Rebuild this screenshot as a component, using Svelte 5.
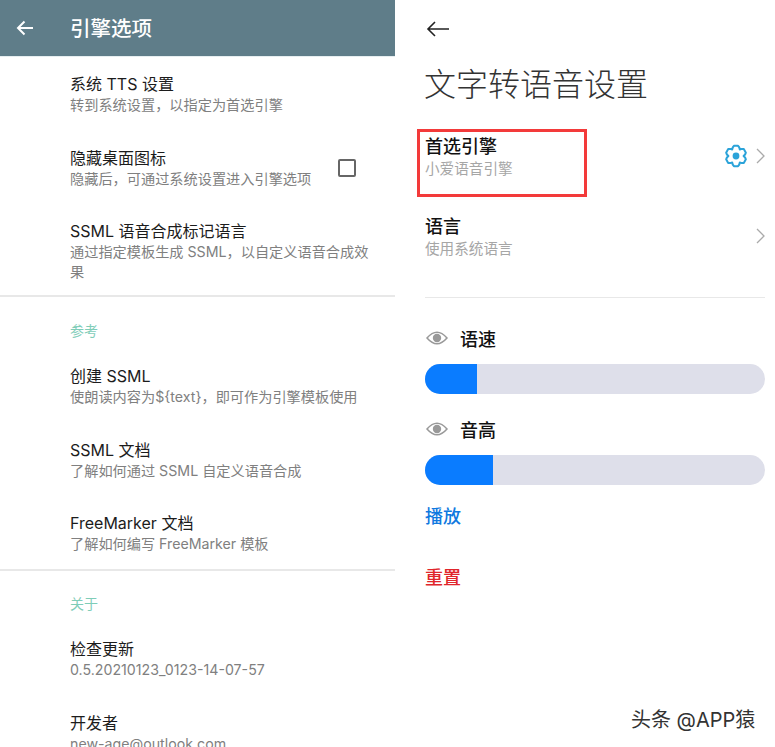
<script>
	// left list: sections of settings rows
	const sections = [
		{
			items: [
				{ title: '系统 TTS 设置', sub: '转到系统设置，以指定为首选引擎' },
				{ title: '隐藏桌面图标', sub: '隐藏后，可通过系统设置进入引擎选项', check: true },
				{ title: 'SSML 语音合成标记语言', sub: '通过指定模板生成 SSML，以自定义语音合成效果' }
			]
		},
		{
			label: '参考',
			items: [
				{ title: '创建 SSML', sub: '使朗读内容为${text}，即可作为引擎模板使用' },
				{ title: 'SSML 文档', sub: '了解如何通过 SSML 自定义语音合成' },
				{ title: 'FreeMarker 文档', sub: '了解如何编写 FreeMarker 模板' }
			]
		},
		{
			label: '关于',
			items: [
				{ title: '检查更新', sub: '0.5.20210123_0123-14-07-57' },
				{ title: '开发者', sub: 'new-age@outlook.com' }
			]
		}
	];

	const sliders = [
		{ name: '语速', fill: 52 },
		{ name: '音高', fill: 68 }
	];

	// six tooth cog outline
	function cogPath() {
		let d = '';
		for (let i = 0; i < 6; i++) {
			const a = (i * Math.PI) / 3 - Math.PI / 2;
			const pts = [
				[-0.36, 9.2],
				[-0.2, 10.4],
				[0.2, 10.4],
				[0.36, 9.2]
			];
			for (const [da, r] of pts) {
				const x = 12 + r * Math.cos(a + da);
				const y = 12 + r * Math.sin(a + da);
				d += (d ? 'L' : 'M') + x.toFixed(2) + ' ' + y.toFixed(2);
			}
			const mid = a + Math.PI / 6;
			d += 'L' + (12 + 7.6 * Math.cos(mid)).toFixed(2) + ' ' + (12 + 7.6 * Math.sin(mid)).toFixed(2);
		}
		return d + 'Z';
	}
</script>

<main class="page">
	<section class="left">
		<header class="appbar">
			<svg class="appbar-back" width="18" height="16" viewBox="0 0 18 16">
				<path d="M17 8H2M8.5 1.5L2 8l6.5 6.5" fill="none" stroke="#fff" stroke-width="2" />
			</svg>
			<h1>引擎选项</h1>
		</header>

		<div class="list">
			{#each sections as section, s}
				<div class="group" class:last={s === sections.length - 1}>
					{#if section.label}
						<div class="group-label">{section.label}</div>
					{/if}
					{#each section.items as item}
						<div class="row">
							<div class="row-text">
								<div class="row-title">{item.title}</div>
								<div class="row-sub">{item.sub}</div>
							</div>
							{#if item.check}
								<span class="checkbox"></span>
							{/if}
						</div>
					{/each}
				</div>
			{/each}
		</div>
	</section>

	<section class="right">
		<svg class="back" width="24" height="16" viewBox="0 0 24 16">
			<path d="M23 8H2M9 1L2 8l7 7" fill="none" stroke="#222" stroke-width="1.6" />
		</svg>
		<h2 class="big-title">文字转语音设置</h2>

		<div class="pref first">
			<div>
				<div class="pref-title">首选引擎</div>
				<div class="pref-sub">小爱语音引擎</div>
			</div>
			<div class="pref-end">
				<svg width="24" height="24" viewBox="0 0 24 24">
					<path d={cogPath()} fill="none" stroke="#2ba3d9" stroke-width="2" stroke-linejoin="round" />
					<circle cx="12" cy="12" r="3.4" fill="#2ba3d9" />
				</svg>
				<svg class="chev" width="9" height="16" viewBox="0 0 9 16">
					<path d="M1 1l7 7-7 7" fill="none" stroke="#aaa" stroke-width="1.3" />
				</svg>
			</div>
			<span class="marker"></span>
		</div>

		<div class="pref">
			<div>
				<div class="pref-title">语言</div>
				<div class="pref-sub">使用系统语言</div>
			</div>
			<div class="pref-end">
				<svg class="chev" width="9" height="16" viewBox="0 0 9 16">
					<path d="M1 1l7 7-7 7" fill="none" stroke="#aaa" stroke-width="1.3" />
				</svg>
			</div>
		</div>

		<hr class="rule" />

		<div class="sliders">
			{#each sliders as slider}
				<div class="slider">
					<div class="slider-head">
						<svg width="22" height="16" viewBox="0 0 22 16">
							<path d="M1 8Q11 -3.5 21 8Q11 19.500 1 8Z" fill="none" stroke="#999" stroke-width="1.5" />
							<circle cx="11" cy="8" r="4.200" fill="#999" />
						</svg>
						<span>{slider.name}</span>
					</div>
					<div class="track">
						<div class="fill" style="width:{slider.fill}px"></div>
					</div>
				</div>
			{/each}
		</div>

		<div class="action play">播放</div>
		<div class="action reset">重置</div>
	</section>

	<div class="watermark">头条 @APP猿</div>
</main>

<style>
	:global(body) {
		background: #fff;
	}
	.page {
		position: relative;
		display: flex;
		width: 775px;
		height: 747px;
		overflow: hidden;
		background: #fff;
		font-family: "Inter", "Noto Sans CJK SC", sans-serif;
	}
	.left {
		width: 395px;
		flex: none;
	}
	.appbar {
		display: flex;
		align-items: center;
		height: 57px;
		background: #5f7d89;
		border-bottom: 1px solid #e6eef0;
		color: #fff;
		box-sizing: border-box;
	}
	.appbar-back {
		margin-left: 16px;
	}
	.appbar h1 {
		margin: 2px 0 0 36px;
		font-size: 20.5px;
		font-weight: 500;
		line-height: 1;
	}
	.list {
		padding-top: 1px;
	}
	.group {
		border-bottom: 2px solid #e8e8e8;
	}
	.group.last {
		border-bottom: none;
	}
	.group-label {
		padding: 23px 0 8px 70px;
		height: 22px;
		font-size: 14px;
		line-height: 22px;
		color: #7fcdb8;
	}
	.group.last .group-label {
		padding-top: 22px;
	}
	.row {
		display: flex;
		align-items: center;
		padding: 16px 23px 16.5px 70px;
	}
	.row:last-child {
		padding-bottom: 15px;
	}
	.group:first-child .row:last-child {
		padding-bottom: 13px;
	}
	.row-text {
		flex: 1;
		min-width: 0;
	}
	.row-title {
		font-size: 16px;
		line-height: 21px;
		color: #1c1c1c;
	}
	.row-sub {
		font-size: 14.2px;
		line-height: 20px;
		color: #808080;
	}
	.checkbox {
		flex: none;
		width: 14px;
		height: 14px;
		margin: 0 16px;
		border: 2px solid #666;
		border-radius: 2px;
	}
	.right {
		flex: 1;
		padding: 0 10px 0 30px;
	}
	.back {
		display: block;
		margin: 21px 0 0 1px;
	}
	.big-title {
		margin: 25px 0 0 -1px;
		font-size: 32px;
		font-weight: 300;
		line-height: 46px;
		color: #333;
	}
	.pref {
		position: relative;
		display: flex;
		align-items: center;
		justify-content: space-between;
		height: 80px;
	}
	.pref.first {
		margin-top: 9px;
	}
	.pref-title {
		font-size: 18px;
		font-weight: 500;
		line-height: 24px;
		color: #111;
	}
	.pref-sub {
		font-size: 14.6px;
		line-height: 20px;
		color: #a6a6a6;
	}
	.pref-end {
		display: flex;
		align-items: center;
		gap: 8px;
		margin-top: -2px;
	}
	.marker {
		position: absolute;
		left: -8px;
		top: 12px;
		width: 164px;
		height: 62px;
		border: 3px solid #f33a3a;
	}
	.rule {
		margin: 20px 0 0;
		border: none;
		border-top: 1px solid #e8e8e8;
	}
	.sliders {
		display: flex;
		flex-direction: column;
		gap: 22px;
		margin-top: 27px;
	}
	.slider-head {
		display: flex;
		align-items: center;
		gap: 12px;
		height: 26px;
		margin-bottom: 13px;
		padding-left: 1px;
		font-size: 18px;
		font-weight: 500;
		color: #111;
	}
	.track {
		height: 30px;
		border-radius: 15px;
		background: #dedfea;
		overflow: hidden;
	}
	.fill {
		height: 100%;
		background: #0a7cff;
	}
	.action {
		font-size: 18px;
		font-weight: 500;
		line-height: 26px;
	}
	.play {
		margin-top: 19px;
		color: #0f79e0;
	}
	.reset {
		margin-top: 35px;
		color: #e0252b;
	}
	.watermark {
		position: absolute;
		left: 631px;
		top: 707px;
		font-size: 20px;
		line-height: 26px;
		color: #333;
		white-space: nowrap;
	}
</style>
